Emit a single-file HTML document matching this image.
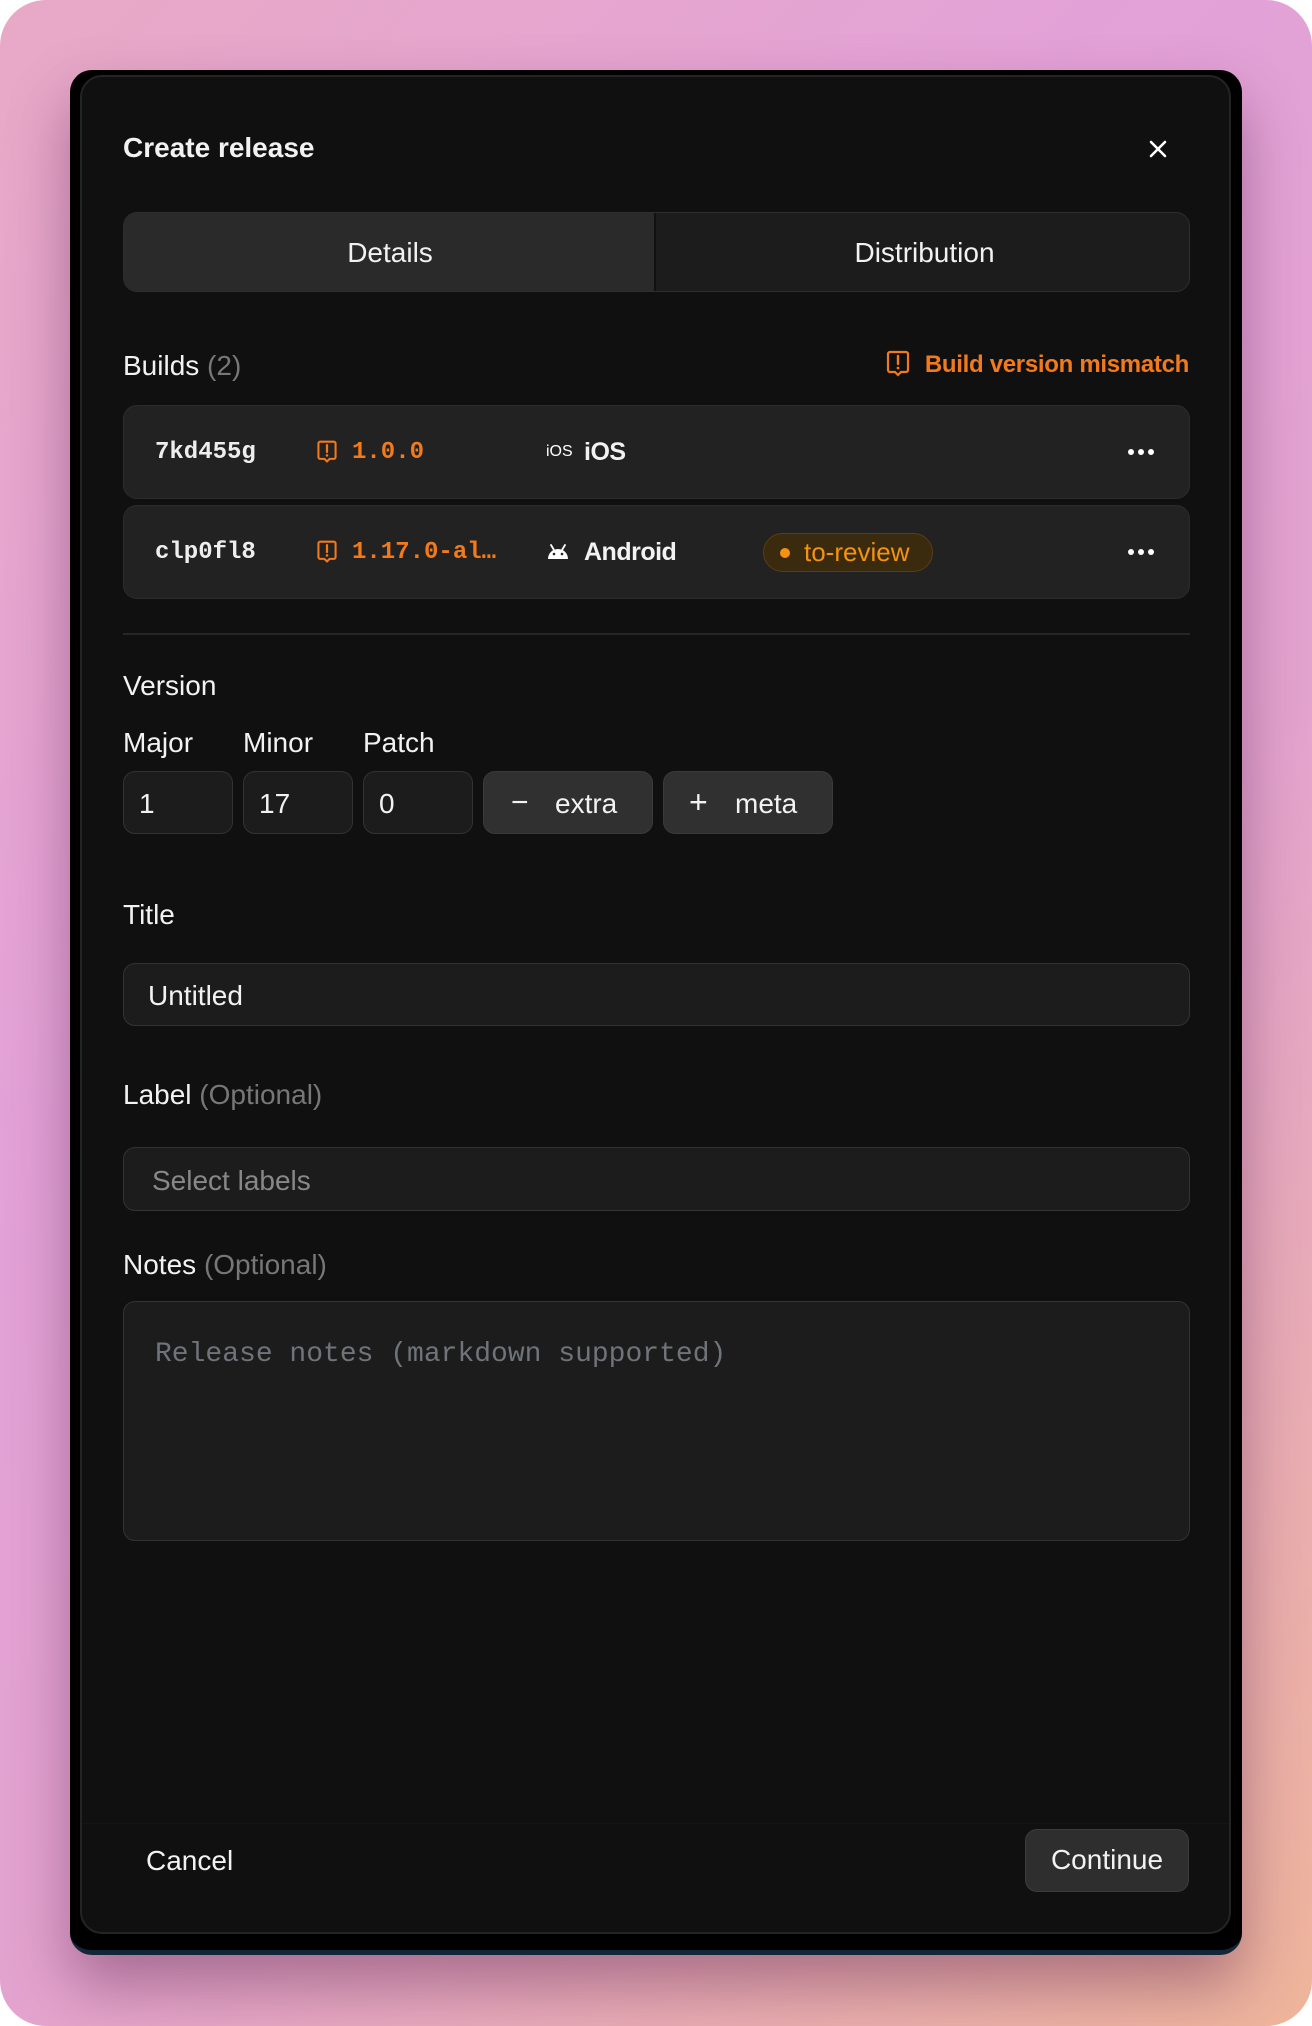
<!DOCTYPE html>
<html><head><meta charset="utf-8"><style>
*{box-sizing:border-box;margin:0;padding:0}
html,body{width:1312px;height:2026px;background:#fff;overflow:hidden}
body{font-family:"Liberation Sans",sans-serif;color:#f2f2f2}
.bg{position:absolute;left:0;top:0;width:1312px;height:2026px;border-radius:46px;
background:linear-gradient(135deg,#e8a9c6 0%,#e3a2d8 35%,#e3a3cf 60%,#efb59a 100%);}
.frame{position:absolute;left:70px;top:70px;width:1172px;height:1885px;background:#000;border-radius:22px;
box-shadow:0 30px 60px rgba(90,40,80,.45);border-bottom:5px solid #13273b}
.card{position:absolute;left:80px;top:75px;width:1151px;height:1859px;background:#101010;border:2px solid #242424;border-radius:22px}
.a{position:absolute}
.mono{font-family:"Liberation Mono",monospace}
.lbl{font-size:28px;color:#f2f2f2}
.opt{color:#777}
.box{position:absolute;background:#1c1c1c;border:1.5px solid #333;border-radius:12px}
.row{position:absolute;left:123px;width:1067px;background:#222;border:1.5px solid #2c2c2c;border-radius:14px}
.dots{position:absolute;right:35px;top:50%;margin-top:-3px;width:26px;height:6px}
.dots i{position:absolute;top:0;width:6px;height:6px;border-radius:3px;background:#fff}
.or{color:#f07a1c}
</style></head><body>
<div class="bg"></div>
<div class="frame"></div>
<div class="card"></div>

<div class="a" style="left:123px;top:132px;font-size:28px;font-weight:bold">Create release</div>
<svg class="a" style="left:1148px;top:139px" width="20" height="20" viewBox="0 0 20 20"><path d="M3 3L17 17M17 3L3 17" stroke="#fff" stroke-width="2.6" stroke-linecap="round"/></svg>

<div class="a" style="left:123px;top:212px;width:1067px;height:80px;border:1.5px solid #2e2e2e;border-radius:14px;background:#1c1c1c;overflow:hidden">
 <div class="a" style="left:0;top:0;width:532px;height:80px;background:#2a2a2a;border-right:2px solid #111"></div>
 <div class="a" style="left:0;top:0;width:532px;line-height:79px;text-align:center;font-size:28px">Details</div>
 <div class="a" style="left:534px;top:0;width:533px;line-height:79px;text-align:center;font-size:28px">Distribution</div>
</div>

<div class="a lbl" style="left:123px;top:350px">Builds <span class="opt">(2)</span></div>
<svg class="a" style="left:886px;top:350px" width="24" height="28" viewBox="0 0 24 28"><path d="M4 2h16a2 2 0 0 1 2 2v16a2 2 0 0 1-2 2h-5l-3 3-3-3H4a2 2 0 0 1-2-2V4a2 2 0 0 1 2-2z" fill="none" stroke="#f07a1c" stroke-width="2.2"/><path d="M12 6v8" stroke="#f07a1c" stroke-width="2.4" stroke-linecap="round"/><circle cx="12" cy="18" r="1.4" fill="#f07a1c"/></svg>
<div class="a or" style="right:123px;top:351px;font-size:24px;font-weight:bold;letter-spacing:-0.3px">Build version mismatch</div>

<div class="row" style="top:405px;height:94px">
 <div class="a mono" style="left:31px;top:33px;font-size:24px;font-weight:bold;color:#eee">7kd455g</div>
 <svg class="a" style="left:192px;top:34px" width="22" height="24" viewBox="0 0 24 28"><path d="M4 2h16a2 2 0 0 1 2 2v16a2 2 0 0 1-2 2h-5l-3 3-3-3H4a2 2 0 0 1-2-2V4a2 2 0 0 1 2-2z" fill="none" stroke="#f07a1c" stroke-width="2.4"/><path d="M12 6v8" stroke="#f07a1c" stroke-width="2.6" stroke-linecap="round"/><circle cx="12" cy="18" r="1.5" fill="#f07a1c"/></svg>
 <div class="a mono or" style="left:228px;top:33px;font-size:24px;font-weight:bold">1.0.0</div>
 <div class="a" style="left:422px;top:37px;font-size:16px;color:#fff">iOS</div>
 <div class="a" style="left:460px;top:32px;font-size:25px;font-weight:bold;letter-spacing:-0.5px">iOS</div>
 <div class="dots"><i style="left:0"></i><i style="left:10px"></i><i style="left:20px"></i></div>
</div>
<div class="row" style="top:505px;height:94px">
 <div class="a mono" style="left:31px;top:33px;font-size:24px;font-weight:bold;color:#eee">clp0fl8</div>
 <svg class="a" style="left:192px;top:34px" width="22" height="24" viewBox="0 0 24 28"><path d="M4 2h16a2 2 0 0 1 2 2v16a2 2 0 0 1-2 2h-5l-3 3-3-3H4a2 2 0 0 1-2-2V4a2 2 0 0 1 2-2z" fill="none" stroke="#f07a1c" stroke-width="2.4"/><path d="M12 6v8" stroke="#f07a1c" stroke-width="2.6" stroke-linecap="round"/><circle cx="12" cy="18" r="1.5" fill="#f07a1c"/></svg>
 <div class="a mono or" style="left:228px;top:33px;font-size:24px;font-weight:bold">1.17.0-al…</div>
 <svg class="a" style="left:422px;top:36px" width="24" height="18" viewBox="0 0 24 18"><path d="M2 17a10 10 0 0 1 20 0z" fill="#fff"/><path d="M5 3l3 5M19 3l-3 5" stroke="#fff" stroke-width="1.8" stroke-linecap="round"/><circle cx="8" cy="12" r="1.3" fill="#222"/><circle cx="16" cy="12" r="1.3" fill="#222"/></svg>
 <div class="a" style="left:460px;top:32px;font-size:25px;font-weight:bold;letter-spacing:-0.5px">Android</div>
 <div class="a" style="left:639px;top:27px;width:170px;height:39px;border-radius:20px;background:#3a2a0e;border:1.5px solid #5a3e12"></div>
 <div class="a" style="left:656px;top:42px;width:10px;height:10px;border-radius:5px;background:#f5920f"></div>
 <div class="a" style="left:680px;top:31px;font-size:26px;color:#f5920f">to-review</div>
 <div class="dots"><i style="left:0"></i><i style="left:10px"></i><i style="left:20px"></i></div>
</div>

<div class="a" style="left:123px;top:633px;width:1067px;height:1.5px;background:#262626"></div>

<div class="a lbl" style="left:123px;top:670px">Version</div>
<div class="a lbl" style="left:123px;top:727px">Major</div>
<div class="a lbl" style="left:243px;top:727px">Minor</div>
<div class="a lbl" style="left:363px;top:727px">Patch</div>
<div class="box" style="left:123px;top:771px;width:110px;height:63px"><span class="a" style="left:15px;top:16px;font-size:28px">1</span></div>
<div class="box" style="left:243px;top:771px;width:110px;height:63px"><span class="a" style="left:15px;top:16px;font-size:28px">17</span></div>
<div class="box" style="left:363px;top:771px;width:110px;height:63px"><span class="a" style="left:15px;top:16px;font-size:28px">0</span></div>
<div class="box" style="left:483px;top:771px;width:170px;height:63px;background:#303030;border-color:#3a3a3a"><span class="a" style="left:27px;top:14px;font-size:30px">−</span><span class="a" style="left:71px;top:16px;font-size:28px">extra</span></div>
<div class="box" style="left:663px;top:771px;width:170px;height:63px;background:#303030;border-color:#3a3a3a"><span class="a" style="left:25px;top:12px;font-size:32px">+</span><span class="a" style="left:71px;top:16px;font-size:28px">meta</span></div>

<div class="a lbl" style="left:123px;top:899px">Title</div>
<div class="box" style="left:123px;top:963px;width:1067px;height:63px"><span class="a" style="left:24px;top:16px;font-size:28px">Untitled</span></div>

<div class="a lbl" style="left:123px;top:1079px">Label <span class="opt">(Optional)</span></div>
<div class="box" style="left:123px;top:1147px;width:1067px;height:64px"><span class="a" style="left:28px;top:17px;font-size:28px;color:#888">Select labels</span></div>

<div class="a lbl" style="left:123px;top:1249px">Notes <span class="opt">(Optional)</span></div>
<div class="box" style="left:123px;top:1301px;width:1067px;height:240px"><span class="a mono" style="left:31px;top:37px;font-size:28px;color:#6f737a">Release notes (markdown supported)</span></div>

<div class="a" style="left:82px;top:1823px;width:1147px;height:1px;background:#151515"></div>
<div class="a" style="left:146px;top:1845px;font-size:28px">Cancel</div>
<div class="a" style="left:1025px;top:1829px;width:164px;height:63px;background:#2e2e2e;border:1.5px solid #3c3c3c;border-radius:12px;text-align:center;line-height:60px;font-size:28px">Continue</div>
</body></html>
